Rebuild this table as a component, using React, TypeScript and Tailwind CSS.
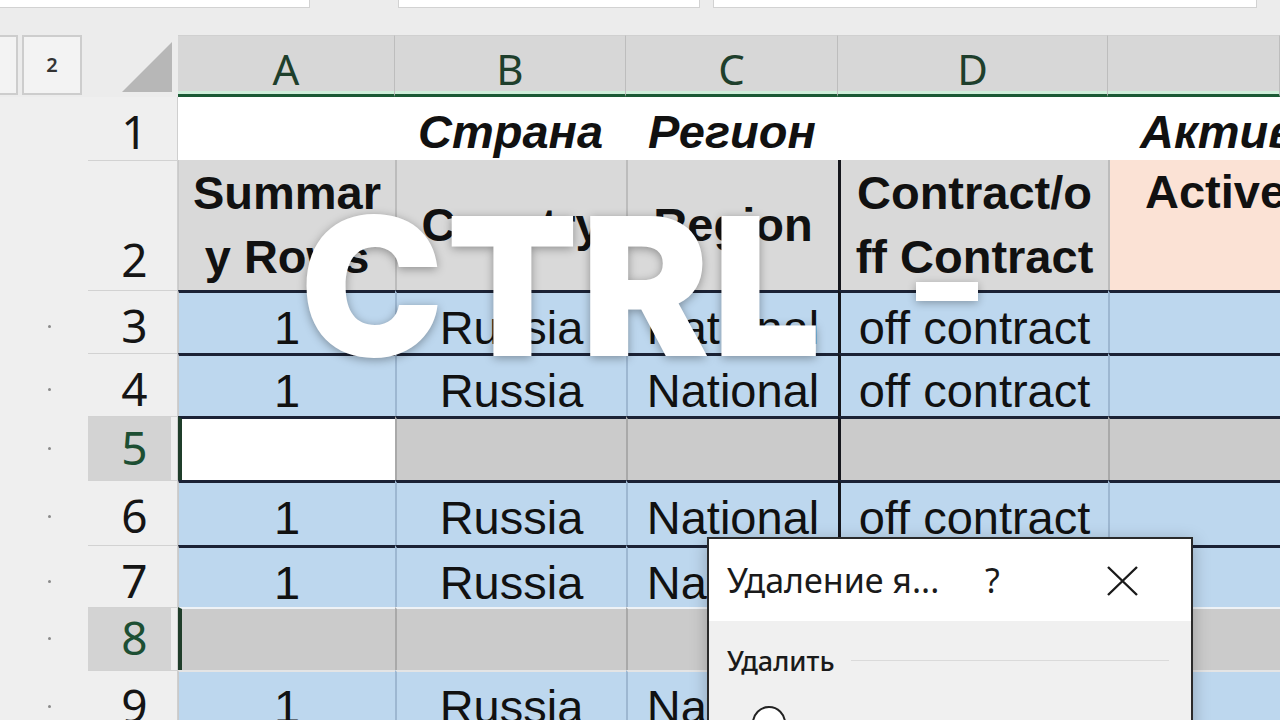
const GRID = "grid grid-cols-[88px_90px_217px_231px_212px_270px_172px]";
const CELL_FONT = "font-['Liberation_Sans',Arial,sans-serif] text-[47px] text-[#111]";
const UI_FONT = "font-['Noto_Sans','Open_Sans',sans-serif]";

type DataRowProps = {
  n: number;
  gray?: boolean;
  topDark?: boolean;
  sel?: "white" | "gray";
  h: string;
};

function RowNumber({ n, sel, top, bottom }: { n: number; sel?: boolean; top: string; bottom?: boolean }) {
  return (
    <div className={`${top} border-r border-r-[#cfcfcf] bg-[#efefef] pr-[6px]`}>
      <div
        className={`flex h-full justify-center pl-[10px] ${bottom ? "items-end pb-[8px]" : "items-center pb-[4px]"} ${UI_FONT} text-[46px] leading-none ${
          sel ? "bg-[#d3d3d3] text-[#1d4f33]" : "text-[#151515]"
        }`}
      >
        {n}
      </div>
    </div>
  );
}

function OutlineDot({ show }: { show: boolean }) {
  return (
    <div className="flex items-center bg-[#efefef] pl-[48px]">
      {show && <span className="h-[3px] w-[3px] rounded-full bg-[#8a8a8a]" />}
    </div>
  );
}

function DataRow({ n, gray, topDark, sel, h }: DataRowProps) {
  const fill = gray ? "bg-[#cbcbcb]" : "bg-[#bdd7ee]";
  const top = topDark
    ? "border-t-[3px] border-t-[#1b2235]"
    : gray
      ? "border-t-2 border-t-[#eef2f6]"
      : "border-t-2 border-t-[#e4e4e4]";
  const vline = gray ? "border-l-2 border-l-[#a9a9a9]" : "border-l-2 border-l-[#9db7d1]";
  const aFill = sel === "white" ? "bg-white" : fill;
  const aLeft = sel ? "border-l-[4px] border-l-[#1f3d2a]" : "border-l border-l-[#c9c9c9]";
  const text = !gray && !sel;
  return (
    <div className={`${GRID} ${h}`}>
      <OutlineDot show />
      <RowNumber n={n} sel={!!sel} top="border-t border-t-[#d2d2d2]" />
      <div className={`${top} ${aLeft} ${aFill} flex items-center justify-center ${CELL_FONT}`}>{text && "1"}</div>
      <div className={`${top} ${vline} ${fill} flex items-center justify-center ${CELL_FONT}`}>{text && "Russia"}</div>
      <div className={`${top} ${vline} ${fill} flex items-center justify-center ${CELL_FONT}`}>{text && "National"}</div>
      <div className={`${top} border-l-[3px] border-l-[#15161c] ${fill} flex items-center justify-center ${CELL_FONT}`}>
        {text && "off contract"}
      </div>
      <div className={`${top} ${vline} ${fill}`} />
    </div>
  );
}

export default function App() {
  return (
    <div className="relative h-[720px] w-[1280px] overflow-hidden bg-[#ececec]">
      {/* formula bar remnants */}
      <div className="flex h-[35px] items-start">
        <div className="h-[8px] w-[310px] border-b border-r border-[#d2d2d2] bg-white" />
        <div className="ml-[88px] h-[8px] w-[302px] border-x border-b border-[#d2d2d2] bg-white" />
        <div className="ml-[13px] h-[8px] w-[544px] border-x border-b border-[#d2d2d2] bg-white" />
      </div>

      {/* column headers */}
      <div className={`${GRID} h-[62px]`}>
        <div className="flex items-start">
          <div className="-ml-[42px] h-[60px] w-[60px] border-2 border-[#cdcdcd] bg-[#f3f3f3]" />
          <div
            className={`ml-[4px] flex h-[60px] w-[60px] items-center justify-center border-2 border-[#cdcdcd] bg-[#f3f3f3] ${UI_FONT} text-[20px] font-semibold text-[#333]`}
          >
            2
          </div>
        </div>
        <div className="flex items-start pl-[34px] pt-[7px]">
          <svg width="50" height="50" viewBox="0 0 50 50">
            <polygon points="50,0 50,50 0,50" fill="#b7b7b7" />
          </svg>
        </div>
        {["A", "B", "C", "D", ""].map((l, i) => (
          <div
            key={i}
            className={`flex items-center justify-center border-b-[3px] border-r border-t border-b-[#1b5a35] border-r-[#bdbdbd] border-t-[#d0d0d0] bg-[#d7d7d7] pt-[8px] shadow-[inset_0_-3px_0_#cfeeda] ${UI_FONT} text-[42px] leading-none text-[#1e3f2c]`}
          >
            {l}
          </div>
        ))}
      </div>

      {/* row 1 */}
      <div className={`${GRID} h-[63px]`}>
        <OutlineDot show={false} />
        <RowNumber n={1} top="" />
        <div className="border-b border-b-[#cfcfcf] bg-white" />
        <div className={`flex items-center justify-center border-b border-b-[#cfcfcf] bg-white ${CELL_FONT} font-bold italic`}>
          Страна
        </div>
        <div className={`flex items-center justify-center border-b border-b-[#cfcfcf] bg-white ${CELL_FONT} font-bold italic`}>
          Регион
        </div>
        <div className="border-b border-b-[#cfcfcf] bg-white" />
        <div
          className={`flex items-center overflow-hidden whitespace-nowrap border-b border-b-[#cfcfcf] bg-white pl-[32px] ${CELL_FONT} font-bold italic`}
        >
          Активность
        </div>
      </div>

      {/* row 2 */}
      <div className={`${GRID} h-[130px]`}>
        <OutlineDot show={false} />
        <RowNumber n={2} top="border-t border-t-[#d2d2d2]" bottom />
        <div
          className={`flex flex-col items-center justify-center border-l border-l-[#c9c9c9] bg-[#d9d9d9] ${CELL_FONT} font-bold leading-[64px]`}
        >
          <span>Summar</span>
          <span>y Rows</span>
        </div>
        <div className={`flex items-center justify-center border-l-2 border-l-[#bcbcbc] bg-[#d9d9d9] ${CELL_FONT} font-bold`}>
          Country
        </div>
        <div className={`flex items-center justify-center border-l-2 border-l-[#bcbcbc] bg-[#d9d9d9] ${CELL_FONT} font-bold`}>
          Region
        </div>
        <div
          className={`flex flex-col items-center justify-center border-l-[3px] border-l-[#15161c] bg-[#d9d9d9] ${CELL_FONT} font-bold leading-[64px]`}
        >
          <span>Contract/o</span>
          <span>ff Contract</span>
        </div>
        <div
          className={`overflow-hidden whitespace-nowrap border-l-2 border-l-[#bcbcbc] bg-[#fbe2d5] pl-[35px] ${CELL_FONT} font-bold leading-[64px]`}
        >
          Active
        </div>
      </div>

      <DataRow n={3} topDark h="h-[63px]" />
      <DataRow n={4} topDark h="h-[63px]" />
      <DataRow n={5} topDark gray sel="white" h="h-[64px]" />
      <DataRow n={6} topDark h="h-[65px]" />
      <DataRow n={7} topDark h="h-[62px]" />
      <DataRow n={8} gray sel="gray" h="h-[63px]" />
      <DataRow n={9} h="h-[63px]" />

      {/* keyboard shortcut overlay */}
      <div className="pointer-events-none absolute left-[300px] top-[190px] flex items-start">
        <span className="font-['Inter',sans-serif] text-[192px] font-black leading-none tracking-[3px] text-white [text-shadow:0_2px_10px_rgba(0,0,0,0.35)]">
          CTRL
        </span>
        <span className="ml-[92px] mt-[92px] h-[19px] w-[62px] bg-white shadow-[0_2px_8px_rgba(0,0,0,0.3)]" />
      </div>

      {/* delete cells dialog */}
      <div className="absolute left-[707px] top-[537px] h-[200px] w-[486px] border-2 border-[#2a2a2a] bg-[#f0f0f0] shadow-[0_4px_16px_rgba(0,0,0,0.25)]">
        <div className={`flex h-[82px] items-center bg-white pl-[18px] ${UI_FONT} text-[34px] leading-none text-[#1a1a1a]`}>
          <span className="w-[258px] whitespace-nowrap">Удаление я...</span>
          <span className="w-[121px]">?</span>
          <svg width="34" height="32" viewBox="0 0 34 32" className="mt-[2px]">
            <path d="M2 2 L31 30 M31 2 L2 30" stroke="#1a1a1a" strokeWidth="2.4" fill="none" />
          </svg>
        </div>
        <div className="px-[18px] pt-[26px]">
          <div className="flex items-center">
            <span className={`${UI_FONT} text-[27px] font-medium leading-none text-[#1a1a1a]`}>Удалить</span>
            <div className="ml-[16px] mr-[4px] h-px flex-1 bg-[#dadada]" />
          </div>
          <div className="ml-[25px] mt-[32px] h-[34px] w-[34px] rounded-full border-2 border-[#222] bg-white" />
        </div>
      </div>
    </div>
  );
}
